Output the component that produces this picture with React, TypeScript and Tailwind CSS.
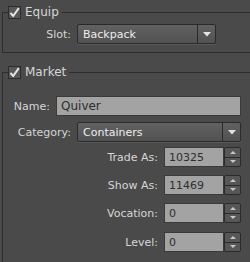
import React from 'react';

const Check = () => (
  <div className="w-[13px] h-[13px] border border-[#2c2c2c] bg-[#585858] flex items-center justify-center">
    <svg width="11" height="11" viewBox="0 0 11 11">
      <path d="M1.5 6 L4.2 9 L9.8 1.2" stroke="#e6e6e6" strokeWidth="2" fill="none" />
    </svg>
  </div>
);

const Arrow = () => (
  <svg width="8" height="5" viewBox="0 0 8 5">
    <path d="M0 0 H8 L4 4.5 Z" fill="#e4e4e4" />
  </svg>
);

const Combo = ({ value, width }: { value: string; width: string }) => (
  <div className={`${width} h-[20px] flex border border-[#2a2a2a] rounded-[2px] bg-gradient-to-b from-[#616161] to-[#525252] shadow-[0_1px_0_#5a5a5a]`}>
    <div className="flex-1 flex items-center pl-[5px] text-[#ececec]">{value}</div>
    <div className="w-[18px] border-l border-[#2a2a2a] flex items-center justify-center">
      <Arrow />
    </div>
  </div>
);

const Spin = ({ value }: { value: string }) => (
  <div className="flex h-[20px]">
    <div className="w-[60px] bg-[#a3a3a3] border border-[#3a3a3a] flex items-center pl-[4px] text-[#2e2e2e]">{value}</div>
    <div className="w-[17px] flex flex-col border border-[#2a2a2a] rounded-[2px] bg-[#575757]">
      <div className="flex-1 flex items-center justify-center border-b border-[#2a2a2a]">
        <svg width="6" height="3" viewBox="0 0 6 3"><path d="M0 3 H6 L3 0 Z" fill="#c8c8c8" /></svg>
      </div>
      <div className="flex-1 flex items-center justify-center">
        <svg width="6" height="3" viewBox="0 0 6 3"><path d="M0 0 H6 L3 3 Z" fill="#c8c8c8" /></svg>
      </div>
    </div>
  </div>
);

const SpinRow = ({ label, value, mt }: { label: string; value: string; mt: string }) => (
  <div className={`flex items-center ${mt}`}>
    <div className="w-[161px] text-right pr-[6px]">{label}</div>
    <Spin value={value} />
  </div>
);

export default function App() {
  return (
    <div
      className="w-[250px] h-[262px] overflow-hidden bg-[#4a4a4a] text-[#d6d6d6] text-[11px] leading-[13px] pt-[4px]"
      style={{ fontFamily: '"DejaVu Sans", Verdana, sans-serif' }}
    >
      <fieldset className="ml-[2px] border border-r-0 border-[#2e2e2e] h-[49px] pb-[8px]">
        <legend className="ml-[5px] pr-[3px] flex items-center gap-[4px] h-[16px]">
          <Check />
          <span className="text-[12px]">Equip</span>
        </legend>
        <div className="flex items-center mt-[4px]">
          <div className="w-[74px] text-right pr-[6px]">Slot:</div>
          <Combo value="Backpack" width="w-[139px]" />
        </div>
      </fieldset>

      <fieldset className="ml-[2px] mt-[11px] border border-r-0 border-b-0 border-[#2e2e2e] h-[200px]">
        <legend className="ml-[5px] pr-[3px] flex items-center gap-[4px] h-[16px]">
          <Check />
          <span className="text-[12px]">Market</span>
        </legend>
        <div className="flex items-center mt-[16px]">
          <div className="w-[53px] text-right pr-[6px]">Name:</div>
          <div className="w-[185px] h-[20px] bg-[#a3a3a3] border border-[#3a3a3a] flex items-center pl-[4px] text-[#2e2e2e] text-[12px]">Quiver</div>
        </div>
        <div className="flex items-center mt-[6px]">
          <div className="w-[74px] text-right pr-[6px]">Category:</div>
          <Combo value="Containers" width="w-[164px]" />
        </div>
        <SpinRow label="Trade As:" value="10325" mt="mt-[5px]" />
        <SpinRow label="Show As:" value="11469" mt="mt-[8px]" />
        <SpinRow label="Vocation:" value="0" mt="mt-[8px]" />
        <SpinRow label="Level:" value="0" mt="mt-[9px]" />
      </fieldset>
    </div>
  );
}
